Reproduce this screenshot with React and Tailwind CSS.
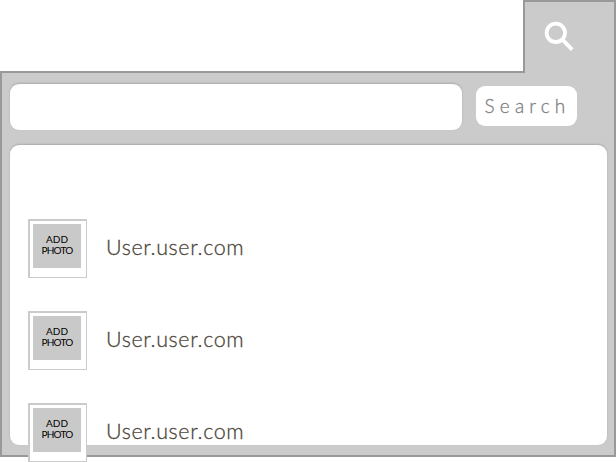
const users = ['User.user.com', 'User.user.com', 'User.user.com'];

function SearchIcon() {
  return (
    <svg className="mt-[19px] ml-[18px] h-8 w-8" viewBox="0 0 32 32" fill="none" stroke="#fff">
      <circle cx="12.8" cy="11.8" r="9.2" strokeWidth="3.8" />
      <path d="M19.2 18.4 29.2 28.6" strokeWidth="3.8" />
    </svg>
  );
}

function PhotoBox() {
  return (
    <div className="h-[59px] w-[59px] shrink-0 border-t-2 border-r border-b border-l-2 border-[#cbcbcb] bg-white pt-[3px] pl-[3px]">
      <div className="flex h-11 w-12 flex-col items-center bg-[#c9c9c9] pt-[10px] text-[10px] leading-[11px] font-normal text-black">
        <span>ADD</span>
        <span className="tracking-[-0.75px]">PHOTO</span>
      </div>
    </div>
  );
}

function UserRow({ name }) {
  return (
    <div className="flex h-[59px] items-center">
      <PhotoBox />
      <span className="-mt-[3px] ml-[19px] text-[21.5px] leading-6 font-light tracking-[0.6px] whitespace-nowrap text-[#4b473b] [-webkit-text-stroke:0.3px_#4b473b]">
        {name}
      </span>
    </div>
  );
}

export default function App() {
  return (
    <div className="h-[462px] w-[616px] overflow-hidden bg-white font-['Lato',sans-serif]">
      <div className="relative z-10 -mb-[2px] ml-auto h-[73px] w-[93px] border-x-2 border-t-2 border-[#999] bg-[#cbcbcb]">
        <SearchIcon />
      </div>
      <div className="h-[386px] border-2 border-[#999] bg-[#cbcbcb] px-2 pt-[11px]">
        <div className="flex gap-[14px]">
          <div className="h-[46px] w-[452px] rounded-[9px] bg-white shadow-[0_-1px_2px_#aaa]" />
          <button className="mt-[2px] h-10 w-[101px] rounded-[9px] bg-white pb-[2px] pl-[2px] text-[19px] leading-none font-light tracking-[5.2px] text-[#808080] [-webkit-text-stroke:0.3px_#808080]">
            Search
          </button>
        </div>
        <div className="mt-[15px] flex h-[300px] w-[597px] flex-col gap-[33px] rounded-[9px] bg-white pt-[74px] pl-[18px] shadow-[0_-1px_2px_#aaa]">
          {users.map((name, i) => (
            <UserRow key={i} name={name} />
          ))}
        </div>
      </div>
    </div>
  );
}
